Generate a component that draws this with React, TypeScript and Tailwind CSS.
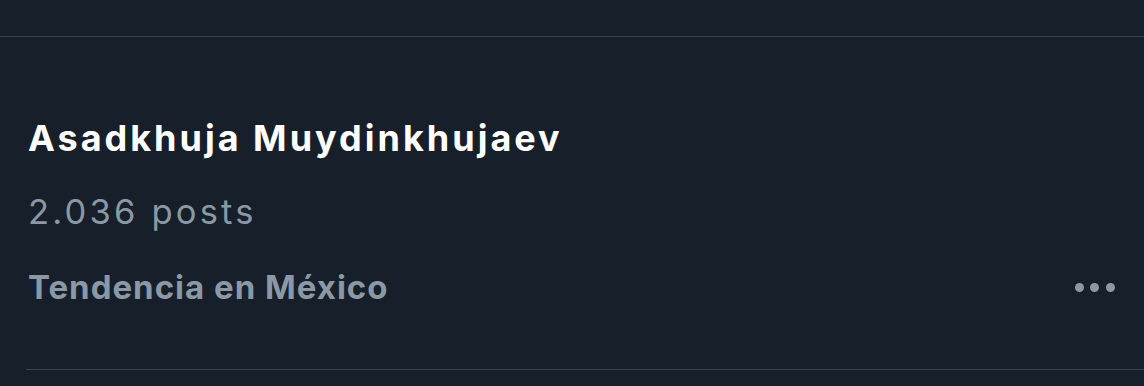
export default function App() {
  return (
    <div className="w-[1144px] h-[386px] bg-[#17202a] overflow-hidden" style={{ fontFamily: 'Inter, "Noto Sans", sans-serif' }}>
      {/* previous item edge */}
      <div className="h-[37px] border-b border-[#38444d]" />

      {/* trend item */}
      <div className="px-7 pt-[79px] pb-[62px]">
        <div className="text-[36px] leading-[44px] font-bold text-white tracking-[3px]">Asadkhuja Muydinkhujaev</div>
        <div className="mt-[32px] text-[34.5px] leading-[40px] text-[#8b98a5] tracking-[3.2px]">2.036 posts</div>
        <div className="mt-[35px] flex items-center justify-between">
          <span className="text-[33px] leading-[40px] font-bold text-[#8b98a5] tracking-[1px]">Tendencia en México</span>
          <div className="flex items-center gap-[6.5px] mr-[1.5px] mt-[1px]">
            <span className="w-[9px] h-[9px] rounded-full bg-[#8b98a5]" />
            <span className="w-[9px] h-[9px] rounded-full bg-[#8b98a5]" />
            <span className="w-[9px] h-[9px] rounded-full bg-[#8b98a5]" />
          </div>
        </div>
      </div>
      <div className="ml-[26px] border-t border-[#38444d]" />
    </div>
  );
}
